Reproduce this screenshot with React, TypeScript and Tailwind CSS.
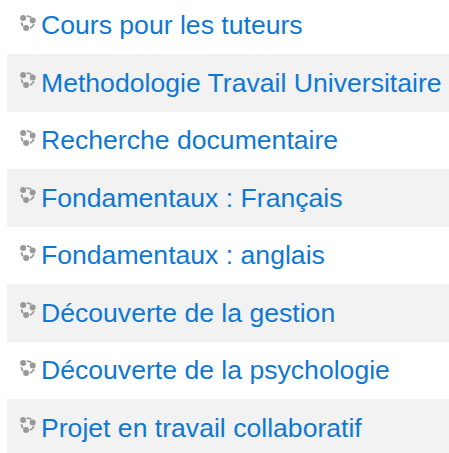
const courses = [
  "Cours pour les tuteurs",
  "Methodologie Travail Universitaire",
  "Recherche documentaire",
  "Fondamentaux : Français",
  "Fondamentaux : anglais",
  "Découverte de la gestion",
  "Découverte de la psychologie",
  "Projet en travail collaboratif",
];

const CourseIcon = () => (
  <svg
    className="mt-[18px] h-4 w-4 shrink-0"
    viewBox="0 0 16 16"
    fill="none"
    aria-hidden="true">
    <path
      d="M6.7 1.1Q9.3.9 11.3 2.5M14 9Q12.8 11.8 10 13.1M1.5 7.2Q1.6 9.4 3 11.2"
      stroke="#999"
      strokeWidth="1.8"
    />
    <circle cx="3.1" cy="3" r="3" fill="#999" />
    <circle cx="12.7" cy="5.6" r="3" fill="#999" />
    <circle cx="6.1" cy="12.9" r="3" fill="#999" />
  </svg>
);

const CourseRow = ({ title }: { title: string }) => (
  <li className="flex h-[57.5px] items-start pl-[13px] even:bg-[#f2f2f2]">
    <CourseIcon />
    <a
      href="#"
      className="ml-[5px] pt-[10.75px] text-[26.6px] leading-9 whitespace-nowrap text-[#0f78d4]">
      {title}
    </a>
  </li>
);

export default function App() {
  return (
    <div className="h-[453px] overflow-hidden bg-white pl-[7px] font-['Liberation_Sans',Arial,sans-serif]">
      <ul className="-mt-[3.5px]">
        {courses.map((title) => (
          <CourseRow key={title} title={title} />
        ))}
      </ul>
    </div>
  );
}
